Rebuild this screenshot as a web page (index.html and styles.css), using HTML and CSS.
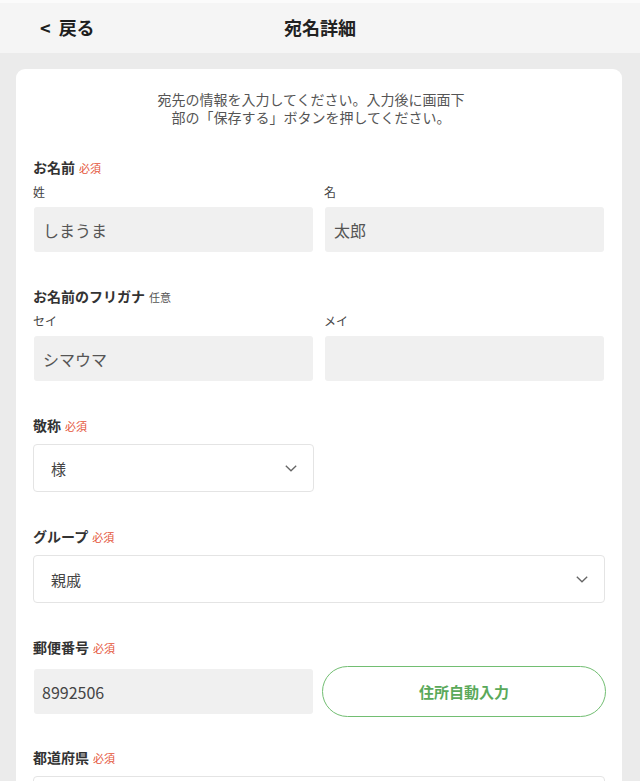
FILE: index.html
```html
<!DOCTYPE html>
<html lang="ja">
<head>
<meta charset="utf-8">
<title>宛名詳細</title>
<link rel="stylesheet" href="styles.css">
</head>
<body>
<header class="topbar">
  <a class="back"><span class="lt">&lt;</span>戻る</a>
  <h1 class="title">宛名詳細</h1>
  <span class="spacer"></span>
</header>
<main class="card">
  <p class="intro">宛先の情報を入力してください。入力後に画面下<br>部の「保存する」ボタンを押してください。</p>

  <section class="section first">
    <div class="label">お名前<span class="req">必須</span></div>
    <div class="cols">
      <div class="col">
        <div class="sublabel">姓</div>
        <div class="input">しまうま</div>
      </div>
      <div class="col">
        <div class="sublabel">名</div>
        <div class="input">太郎</div>
      </div>
    </div>
  </section>

  <section class="section">
    <div class="label">お名前のフリガナ<span class="opt">任意</span></div>
    <div class="cols">
      <div class="col">
        <div class="sublabel">セイ</div>
        <div class="input">シマウマ</div>
      </div>
      <div class="col">
        <div class="sublabel">メイ</div>
        <div class="input"></div>
      </div>
    </div>
  </section>

  <section class="section">
    <div class="label gap">敬称<span class="req">必須</span></div>
    <div class="cols">
      <div class="select">様<svg class="chev" width="12" height="7" viewBox="0 0 12 7"><polyline points="0.8,0.8 6,5.8 11.2,0.8" fill="none" stroke="#666" stroke-width="1.3"/></svg></div>
    </div>
  </section>

  <section class="section">
    <div class="label gap">グループ<span class="req">必須</span></div>
    <div class="select">親戚<svg class="chev" width="12" height="7" viewBox="0 0 12 7"><polyline points="0.8,0.8 6,5.8 11.2,0.8" fill="none" stroke="#666" stroke-width="1.3"/></svg></div>
  </section>

  <section class="section">
    <div class="label gap">郵便番号<span class="req">必須</span></div>
    <div class="cols center">
      <div class="input num">8992506</div>
      <button class="auto">住所自動入力</button>
    </div>
  </section>

  <section class="section tight">
    <div class="label gap">都道府県<span class="req">必須</span></div>
    <div class="select"></div>
  </section>
</main>
</body>
</html>
```

FILE: styles.css
```css
* { box-sizing: border-box; }
html, body { margin: 0; padding: 0; }
body {
  background: #ebebeb;
  font-family: "Noto Sans CJK JP", "Noto Sans", sans-serif;
  color: #333;
  height: 781px;
  overflow: hidden;
}
.topbar {
  display: grid;
  grid-template-columns: 1fr auto 1fr;
  align-items: center;
  height: 53px;
  background: #f5f5f5;
  border-top: 3px solid #fbfbfb;
  padding: 0 40px;
}
.back {
  display: flex;
  align-items: center;
  font-size: 18px;
  font-weight: 700;
  color: #1e1e1e;
  line-height: 22px;
  margin-top: -3px;
}
.lt {
  margin-right: 8px;
}
.title {
  margin: 0;
  font-size: 18px;
  font-weight: 700;
  color: #222;
  line-height: 22px;
  margin-top: -3px;
}
.card {
  background: #fff;
  margin: 16px 18px 0 16px;
  border-radius: 9px 9px 0 0;
  padding: 21px 17px 40px;
}
.intro {
  margin: 0;
  padding-right: 16px;
  text-align: center;
  font-size: 14px;
  line-height: 18px;
  color: #555;
}
.section { margin-top: 34px; }
.section.first { margin-top: 31px; }
.section.tight { margin-top: 30px; }
.label {
  font-size: 14px;
  font-weight: 700;
  line-height: 20px;
  height: 20px;
  color: #333;
  margin-bottom: 7px;
}
.label.gap { margin-bottom: 9px; }
.req {
  font-size: 11px;
  font-weight: 400;
  line-height: 1;
  color: #e4553a;
  margin-left: 4px;
}
.opt {
  font-size: 11px;
  font-weight: 400;
  line-height: 1;
  color: #555;
  margin-left: 4px;
}
.cols {
  display: grid;
  grid-template-columns: 1fr 1fr;
  column-gap: 10px;
}
.cols.center { align-items: center; }
.sublabel {
  font-size: 12px;
  line-height: 16px;
  height: 16px;
  color: #444;
  margin-bottom: 7px;
}
.input {
  height: 45px;
  margin: 0 1px;
  background: #f0f0f0;
  border-radius: 3px;
  padding: 0 9px;
  display: flex;
  align-items: center;
  font-size: 16px;
  color: #555;
}
.input.num { font-size: 16px; padding-left: 8px; color: #444; }
.select {
  height: 48px;
  border: 1px solid #e4e4e4;
  border-radius: 4px;
  background: #fff;
  display: flex;
  align-items: center;
  justify-content: space-between;
  padding: 0 16px 0 17px;
  font-size: 15px;
  color: #444;
}
.chev { display: block; }
.auto {
  height: 51px;
  margin: 0 -1px 0 -2px;
  border: 1.5px solid #72be72;
  border-radius: 26px;
  background: #fff;
  color: #5aa95a;
  font-family: inherit;
  font-size: 15px;
  font-weight: 700;
}
```
